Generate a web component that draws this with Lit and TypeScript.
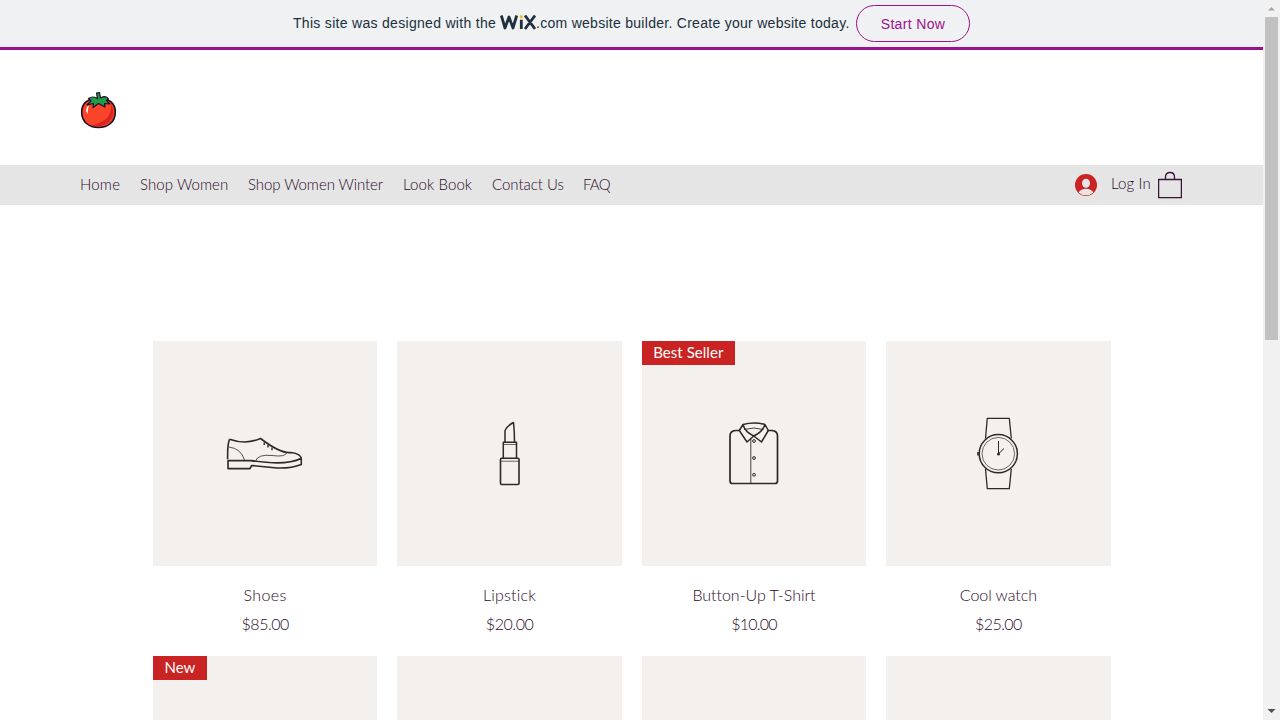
import { LitElement, html, css, svg } from "lit";
import { customElement } from "lit/decorators.js";
import { styleMap } from "lit/directives/style-map.js";

interface Label { text: string; width: number; spacing: number }
interface Product { name: Label; price: Label; icon: unknown; ribbon?: string }

const label = (text: string, width: number, spacing = 0): Label => ({ text, width, spacing });

const NAV: Label[] = [
  label("Home", 40, 0.2), label("Shop Women", 88, 0.08), label("Shop Women Winter", 135, -0.07),
  label("Look Book", 69, 0.12), label("Contact Us", 71, -0.03), label("FAQ", 27, -0.8),
];

const shoe = svg`
  <path d="M76.500 98.200C74 105 74.800 110 74.600 118.300M76.500 98.200Q93 104 107.500 97.500Q128 113 138 111.500Q148 113 148.300 117.500V123.500Q138 127.500 124 127L98.700 124.500L97 127.600H75V119.600H98Q133 125 148 117.500" stroke-width="1.600"/>
  <path d="M76 106Q88 107.500 91.500 119M102.500 120Q105 113 119 114.500Q133 116.500 134 111" stroke-width=".8"/>
  <path d="M111.200 101.500v2.500M115 103.800v2.700M119 106.500v2.700" stroke-width="1.400"/>`;
const lipstick = svg`
  <rect x="103.500" y="117.200" width="18.500" height="26.300" rx="1.200" stroke-width="1.600"/>
  <path d="M106.300 117V101.200H119.500V117M108 101V89.500Q110.500 84.500 116.500 81.500Q117.500 90 117.500 101" stroke-width="1.500"/>
  <path d="M104 120.200H122M106.500 103.500H119" stroke-width=".7"/>`;
const shirt = svg`
  <path d="M98 89.500H93.500Q88 90 88 95V140Q88 142.500 90.500 142.500H133Q135.500 142.500 135.500 140V95Q135.500 90 130 89.500H125.500" stroke-width="1.700"/>
  <path d="M101 83.500Q112 80.500 123 83.500L126.300 89.500L119.500 101L111.800 95L105 101L97.300 89.500ZM101 83.500Q103 91 111.800 95Q120.500 91 123 83.500" stroke-width="1.500"/>
  <path d="M102 88.500Q111.800 85.500 121.500 88.500M108.800 98V142" stroke-width=".9"/>
  <g stroke-width="1"><circle cx="112" cy="100" r="1.400"/><circle cx="112" cy="117" r="1.400"/><circle cx="112" cy="133.800" r="1.400"/></g>`;
const watch = svg`
  <path d="M99.500 97.500L101.300 77.300H123.300L125.300 97.500M99.500 128L101.300 147.700H123.300L125.300 128" stroke-width="1.300"/>
  <circle cx="112.300" cy="112.700" r="19.100" stroke-width="1.500"/><circle cx="112.300" cy="112.700" r="16.300" stroke-width=".7"/>
  <path d="M112.500 112.800V100M112.500 112.800L118 107.500" stroke-width="1"/><path d="M92 111v3.600" stroke-width="1.600"/>
  <circle cx="112.500" cy="113" r="1.500" fill="#2b2a29" stroke="none"/>`;

const PRODUCTS: Product[] = [
  { name: label("Shoes", 43, 0.4), price: label("$85.00", 48, -0.45), icon: shoe },
  { name: label("Lipstick", 53, 0.2), price: label("$20.00", 48, -0.45), icon: lipstick },
  { name: label("Button-Up T-Shirt", 123, -0.02), price: label("$10.00", 46, -0.75), icon: shirt, ribbon: "Best Seller" },
  { name: label("Cool watch", 77, -0.05), price: label("$25.00", 47, -0.6), icon: watch },
];
const NEXT_ROW: (string | undefined)[] = ["New", undefined, undefined, undefined];

@customElement("app-root")
export class AppRoot extends LitElement {
  static styles = css`
    :host { display: flex; width: 1280px; height: 720px; overflow: hidden; background: #fff; font-family: Lato, sans-serif; font-weight: 300; color: #2a0a2a; }
    * { box-sizing: border-box; }
    svg { display: block; flex: none; }
    .page { width: 1263px; height: 720px; overflow: hidden; }
    .banner { height: 50px; display: flex; align-items: flex-start; background: #eff1f2; border-bottom: 3px solid #9e118c; padding: 5px 0 0 293px; font: 400 14px/37px "Liberation Sans", sans-serif; color: #20303c; white-space: nowrap; }
    .intro { width: 207px; letter-spacing: .3px; }
    .outro { width: 320px; letter-spacing: .28px; }
    .wix { margin-top: 10px; }
    .start { width: 114px; height: 37px; border: 1px solid #9e118c; border-radius: 19px; color: #9e118c; text-align: center; line-height: 36px; letter-spacing: .35px; }
    .brand { height: 115px; padding: 41px 0 0 80px; }
    nav { height: 40px; background: #e5e5e5; display: flex; padding: 0 80px; line-height: 39px; font-size: 15px; white-space: nowrap; }
    .links { display: flex; gap: 20px; width: 995px; }
    .login { display: flex; align-items: center; }
    .login-text { width: 40px; margin: 0 7px 0 14px; height: 40px; line-height: 37px; letter-spacing: .15px; }
    .shop { padding: 136px 0 0 153px; display: grid; grid-template-columns: repeat(4, 224.400px); column-gap: 20px; }
    .card { height: 315px; text-align: center; font-size: 16px; white-space: nowrap; }
    .media { height: 225px; background: #f4f0ed; position: relative; }
    .ribbon { position: absolute; left: 0; top: 0; height: 24px; padding: 0 12px 0 11.400px; background: #c92323; color: #fff; font-size: 15px; line-height: 23px; font-weight: 400; letter-spacing: .05px; }
    .name { margin-top: 19px; line-height: 20px; }
    .price { margin-top: 9px; line-height: 20px; }
    .scroll { width: 17px; height: 720px; background: #f1f1f1; display: flex; flex-direction: column; align-items: center; }
    .thumb { width: 13px; height: 323px; background: #c1c1c1; margin-bottom: 363px; }
  `;

  private spaced(l: Label) {
    return html`<span style=${styleMap({ letterSpacing: `${l.spacing}px` })}>${l.text}</span>`;
  }

  private media(icon?: unknown, ribbon?: string) {
    return html`<div class="media">
      ${icon ? html`<svg width="224" height="225" fill="none" stroke="#2b2a29" stroke-linejoin="round">${icon}</svg>` : ""}
      ${ribbon ? html`<div class="ribbon">${ribbon}</div>` : ""}
    </div>`;
  }

  render() {
    return html`
      <div class="page">
        <div class="banner">
          <span class="intro">This site was designed with the</span>
          <svg class="wix" width="36" height="15" fill="none" stroke="#20303c" stroke-width="2.800" stroke-linejoin="round">
            <path d="M1.300 .5L5 13L9 2L13 13L16.700 .5M21.300 4.800V14M25 .5L35 14M35 .5L25 14"/>
            <path d="M21.300 .3V3.300" stroke="#fbbd1b"/>
          </svg>
          <span class="outro">.com website builder. Create your website today.</span>
          <div class="start">Start Now</div>
        </div>
        <div class="brand">
          <svg width="37" height="38" stroke-linejoin="round" stroke-linecap="round">
            <path d="M18.500 8.500C9 6 1.700 12 1.700 21C1.700 31 9 36.500 18.500 36.500S35.300 31 35.300 21C35.300 12 28 6 18.500 8.500Z" fill="#fb4429" stroke="#1d0e24" stroke-width="1.600"/>
            <path d="M31 13Q33 29 12 34.500Q21 37 29 31Q37 23 31 13Z" fill="#d8271f"/>
            <path d="M6 20Q6.500 15 9 14.500Q7.500 18 7.500 23Z" fill="#fff"/>
            <path d="M17.500 7.500L16.500 2L19.500 1.500L20.500 7Q26 4 28.500 8L26.500 9.500L30 13L24.500 12.500L25 16L18.500 12.500L13 16.500L13.500 12.500L7 14L11 10L8.500 7.500Q13 4.500 17.500 7.500Z" fill="#1f9c4a" stroke="#1d0e24" stroke-width="1.200"/>
          </svg>
        </div>
        <nav>
          <div class="links">${NAV.map((l) => html`<div style=${styleMap({ width: `${l.width}px` })}>${this.spaced(l)}</div>`)}</div>
          <div class="login">
            <svg width="22" height="22"><circle cx="11" cy="11" r="11" fill="#c92323"/><ellipse cx="11" cy="9.300" rx="4" ry="4.500" fill="#e5e5e5"/><path d="M3.600 18.500Q6 14.800 11 14.800T18.400 18.500Q15.500 21.300 11 21.300T3.600 18.500Z" fill="#e5e5e5"/></svg>
            <span class="login-text">Log In</span>
            <svg width="24" height="28" fill="none" stroke="#3a1438"><path d="M.6 8.500H23.400V26.700H.6ZM7.500 8.500V6Q7.500 1.500 12 1.500T16.500 6V8.500" stroke-width="1.300"/></svg>
          </div>
        </nav>
        <div class="shop">
          ${PRODUCTS.map((p) => html`<div class="card">${this.media(p.icon, p.ribbon)}
            <div class="name">${this.spaced(p.name)}</div><div class="price">${this.spaced(p.price)}</div></div>`)}
          ${NEXT_ROW.map((r) => html`<div class="card">${this.media(undefined, r)}</div>`)}
        </div>
      </div>
      <div class="scroll">
        <svg width="17" height="17"><path d="M5 10.500L8.500 7L12 10.500Z" fill="#a3a3a3"/></svg>
        <div class="thumb"></div>
        <svg width="17" height="17"><path d="M4.500 6L8.500 10L12.500 6Z" fill="#505050"/></svg>
      </div>`;
  }
}
